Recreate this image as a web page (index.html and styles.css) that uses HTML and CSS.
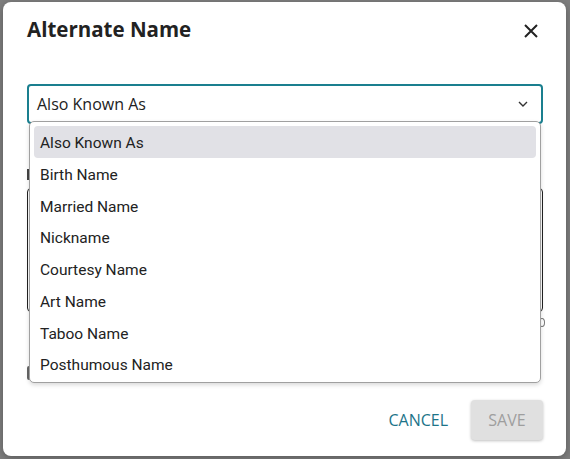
FILE: index.html
```html
<!DOCTYPE html>
<html lang="en">
<head>
<meta charset="utf-8">
<title>Alternate Name</title>
<link rel="stylesheet" href="styles.css">
</head>
<body>
<div class="backdrop">
  <div class="dialog">
    <div class="header">
      <h2 class="title">Alternate Name</h2>
      <button class="close" aria-label="Close">
        <svg width="14" height="14" viewBox="0 0 14 14"><path d="M1 1 L13 13 M13 1 L1 13" stroke="#222" stroke-width="2" fill="none"/></svg>
      </button>
    </div>
    <div class="select">
      <span>Also Known As</span>
      <svg class="chevron" width="10" height="6" viewBox="0 0 10 6"><path d="M1 1 L5 5 L9 1" stroke="#333" stroke-width="1.4" fill="none"/></svg>
    </div>
    <div class="field-label"><span class="stub"></span></div>
    <div class="textarea"></div>
    <div class="helper"><span class="counter"></span></div>
    <div class="check-row"><span class="checkbox"></span></div>
    <div class="footer">
      <button class="btn-text">CANCEL</button>
      <button class="btn-save" disabled>SAVE</button>
    </div>
    <ul class="menu">
      <li class="item active">Also Known As</li>
      <li class="item">Birth Name</li>
      <li class="item">Married Name</li>
      <li class="item">Nickname</li>
      <li class="item">Courtesy Name</li>
      <li class="item">Art Name</li>
      <li class="item">Taboo Name</li>
      <li class="item">Posthumous Name</li>
    </ul>
  </div>
</div>
</body>
</html>
```
FILE: styles.css
```css
html, body {
  margin: 0;
  padding: 0;
}
body {
  background: #7f7f7f;
  width: 570px;
  height: 459px;
  overflow: hidden;
  font-family: "Open Sans", "Noto Sans", sans-serif;
  color: #222;
}
.backdrop {
  padding: 2px 0 0 3px;
}
.dialog {
  position: relative;
  box-sizing: border-box;
  width: 563px;
  height: 454px;
  background: #fff;
  border-radius: 8px;
  box-shadow: 0 2px 8px rgba(0,0,0,0.3);
  padding: 0 23px 16px 24px;
  display: flex;
  flex-direction: column;
}
.header {
  display: flex;
  justify-content: space-between;
  align-items: flex-start;
  padding-top: 13px;
}
.title {
  margin: 0;
  font-size: 20.5px;
  line-height: 28px;
  font-weight: 700;
  color: #222;
}
.close {
  width: 24px;
  height: 24px;
  margin-top: 4px;
  padding: 0;
  border: 0;
  background: none;
  display: flex;
  align-items: center;
  justify-content: center;
}
.select {
  margin-top: 41px;
  box-sizing: border-box;
  height: 40px;
  border: 2px solid #1a7f8f;
  border-radius: 4px;
  padding: 0 13px 0 8px;
  display: flex;
  align-items: center;
  justify-content: space-between;
  font-size: 16px;
  color: #222;
}
.field-label {
  margin-top: 40px;
  height: 20px;
  display: flex;
  align-items: center;
}
.stub {
  width: 2px;
  height: 11px;
  background: #444;
}
.textarea {
  margin-top: 4px;
  box-sizing: border-box;
  height: 124px;
  border: 1px solid #222;
  border-radius: 4px;
}
.helper {
  margin-top: 6px;
  height: 16px;
  display: flex;
  justify-content: flex-end;
  margin-right: -2px;
}
.counter {
  width: 6px;
  height: 9px;
  border: 1.5px solid #777;
  border-radius: 50%;
  box-sizing: border-box;
}
.check-row {
  margin-top: 30px;
  display: flex;
  align-items: center;
  height: 18px;
}
.checkbox {
  box-sizing: border-box;
  width: 16px;
  height: 14px;
  border: 2px solid #666;
  border-radius: 2px;
}
.footer {
  margin-top: auto;
  display: flex;
  justify-content: flex-end;
  gap: 12px;
}
.btn-text, .btn-save {
  height: 40px;
  border: 0;
  border-radius: 4px;
  font-family: "Open Sans", "Noto Sans", sans-serif;
  font-size: 16px;
  font-weight: 500;
  padding: 0 11px;
}
.btn-text {
  background: none;
  color: #1d7489;
}
.btn-save {
  width: 72px;
  background: #e0e0e0;
  color: #9e9e9e;
  box-shadow: 0 1px 3px rgba(0,0,0,0.25);
}
.menu {
  position: absolute;
  left: 26px;
  top: 119px;
  box-sizing: border-box;
  width: 512px;
  height: 262px;
  margin: 0;
  padding: 4px 4px 2px;
  list-style: none;
  background: #fff;
  border: 1px solid #a0a0a0;
  border-radius: 5px;
  box-shadow: 0 2px 4px rgba(0,0,0,0.15);
}
.item {
  height: 29.75px;
  padding-top: 2px;
  line-height: 31.75px;
  padding-left: 6px;
  font-family: Roboto, "Noto Sans", sans-serif;
  font-size: 15.5px;
  color: #222;
  border-radius: 4px;
}
.item.active {
  background: #e1e1e6;
}
```
